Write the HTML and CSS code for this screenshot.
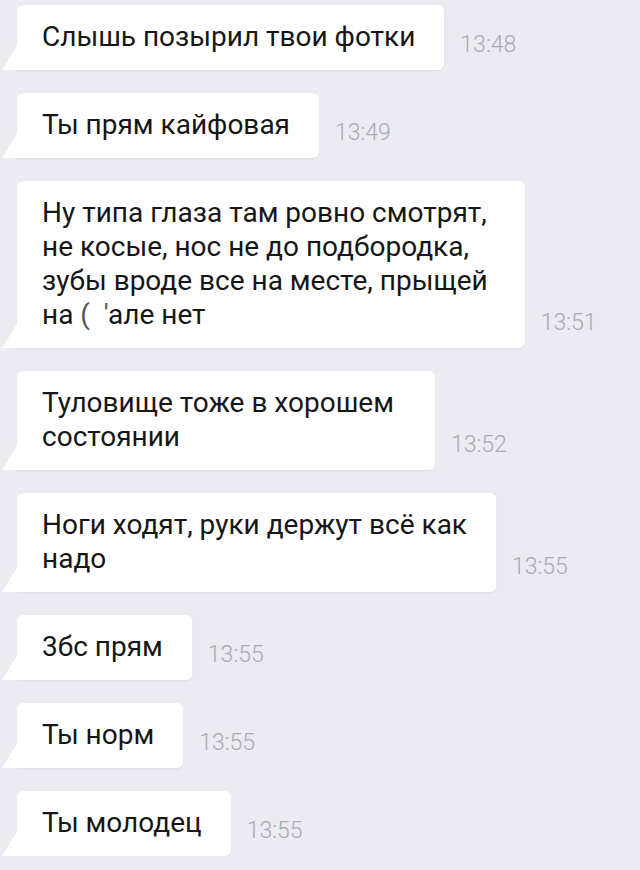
FILE: index.html
```html
<!DOCTYPE html>
<html lang="ru">
<head>
    <meta charset="UTF-8">
    <meta name="viewport" content="width=device-width, initial-scale=1.0">
    <title>Чат</title>
    <link rel="stylesheet" href="styles.css">
</head>
<body>
    <div class="chat">
        <div class="msg">
            <div class="bubble">Слышь позырил твои фотки</div>
            <span class="time">13:48</span>
        </div>
        <div class="msg">
            <div class="bubble">Ты прям кайфовая</div>
            <span class="time">13:49</span>
        </div>
        <div class="msg">
            <div class="bubble wide">Ну типа глаза там ровно смотрят,<br>не косые, нос не до подбородка,<br>зубы вроде все на месте, прыщей<br>на <span class="blot">(</span>&nbsp;&nbsp;<span class="blot">'</span>але нет</div>
            <span class="time">13:51</span>
        </div>
        <div class="msg">
            <div class="bubble wider">Туловище тоже в хорошем<br>состоянии</div>
            <span class="time">13:52</span>
        </div>
        <div class="msg">
            <div class="bubble">Ноги ходят, руки держут всё как<br>надо</div>
            <span class="time">13:55</span>
        </div>
        <div class="msg">
            <div class="bubble">3бс прям</div>
            <span class="time">13:55</span>
        </div>
        <div class="msg">
            <div class="bubble">Ты норм</div>
            <span class="time">13:55</span>
        </div>
        <div class="msg">
            <div class="bubble">Ты молодец</div>
            <span class="time">13:55</span>
        </div>
    </div>
</body>
</html>
```

FILE: styles.css
```css
body {
    margin: 0;
    background-color: #ebebf1;
    font-family: Roboto, "Noto Sans", sans-serif;
    color: #161616;
}
.chat {
    display: flex;
    flex-direction: column;
    gap: 23px;
    padding: 5px 0 0 17px;
}
.msg {
    display: flex;
    align-items: flex-end;
}
.bubble {
    position: relative;
    background-color: #ffffff;
    border-radius: 6px;
    border-bottom-left-radius: 0;
    padding: 15px 29px 16px 25px;
    font-size: 28px;
    line-height: 34px;
    box-shadow: 0 1px 2px rgba(0, 0, 0, 0.06);
}
.bubble::before {
    content: "";
    position: absolute;
    left: -15px;
    bottom: 0;
    width: 16px;
    height: 26px;
    background-color: #ffffff;
    clip-path: polygon(100% 0, 100% 100%, 0 100%);
}
.bubble.wide {
    padding-right: 37px;
}
.bubble.wider {
    padding-right: 41px;
}
.blot {
    color: #555;
}
.time {
    margin: 0 0 12px 16px;
    font-size: 23px;
    font-weight: 300;
    line-height: 26px;
    color: #a7aab6;
}
```
